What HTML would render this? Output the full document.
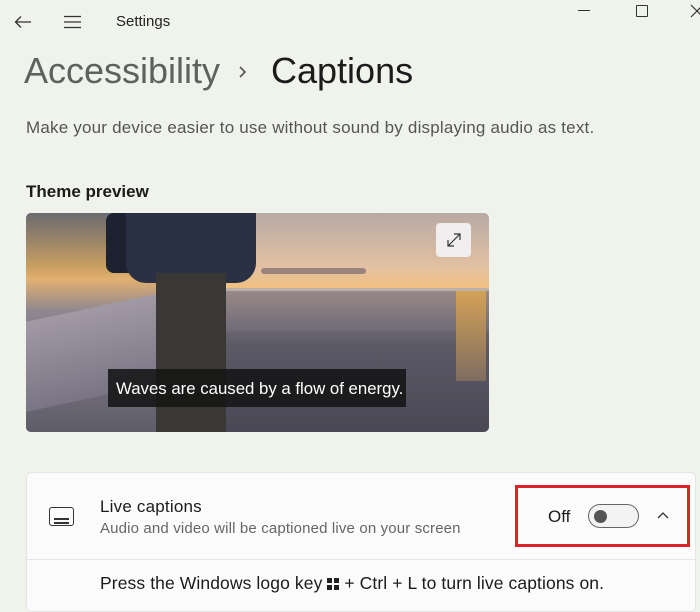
<!DOCTYPE html>
<html><head><style>
*{margin:0;padding:0;box-sizing:border-box}
body{width:700px;height:610px;background:#eff3ec;font-family:"Liberation Sans",sans-serif;position:relative;overflow:hidden;color:#1b1b1b}
.a{position:absolute;white-space:nowrap}
</style></head><body>
<svg class="a" style="left:13px;top:14px" width="20" height="16" viewBox="0 0 20 16"><path d="M18 8H3M8 2.5L2.5 8 8 13.5" stroke="#333" stroke-width="1.3" fill="none"/></svg>
<svg class="a" style="left:63px;top:15px" width="20" height="14"><path d="M1 1.5h17M1 7h17M1 12.5h17" stroke="#333" stroke-width="1.3"/></svg>
<div class="a" style="left:116px;top:13px;font-size:15px;color:#222">Settings</div>
<div class="a" style="left:578px;top:10px;width:12px;height:1px;background:#333"></div>
<div class="a" style="left:636px;top:5px;width:12px;height:12px;border:1.3px solid #333;border-radius:1px"></div>
<svg class="a" style="left:690px;top:4px" width="12" height="14"><path d="M1 1l12 12M13 1L1 13" stroke="#333" stroke-width="1.2"/></svg>
<div class="a" style="left:24px;top:50px;font-size:36px;color:#5f615e">Accessibility</div>
<svg class="a" style="left:238px;top:65px" width="10" height="14"><path d="M2 2l5 5-5 5" stroke="#555" stroke-width="1.6" fill="none"/></svg>
<div class="a" style="left:271px;top:50px;font-size:36px;color:#1b1b1b">Captions</div>
<div class="a" style="left:26px;top:118px;font-size:17px;color:#555;letter-spacing:0.2px">Make your device easier to use without sound by displaying audio as text.</div>
<div class="a" style="left:26px;top:182px;font-size:17px;font-weight:bold;color:#1b1b1b">Theme preview</div>
<div class="a" style="left:26px;top:213px;width:463px;height:219px;border-radius:5px;overflow:hidden;background:linear-gradient(180deg,#b8a9a4 0%,#e3c1a2 25%,#f0c080 34%,#8a7f88 40%,#5d5a68 60%,#4b4856 100%)">
<div class="a" style="left:0;top:0;width:130px;height:219px;background:linear-gradient(180deg,#6a6a70 0%,#caa060 25%,#e2b070 30%,#8e8790 45%,#5f5c6a 100%)"></div>
<div class="a" style="left:0;top:95px;width:130px;height:90px;background:linear-gradient(180deg,#a19aa5,#7a7585);transform:skewY(-12deg)"></div>
<div class="a" style="left:235px;top:55px;width:105px;height:6px;background:#7a6a70;border-radius:3px;opacity:.7"></div>
<div class="a" style="left:200px;top:75px;width:263px;height:3px;background:#bdb0a8"></div>
<div class="a" style="left:200px;top:78px;width:263px;height:40px;background:linear-gradient(180deg,#9a8a88,#6f6b78)"></div>
<div class="a" style="left:430px;top:78px;width:30px;height:90px;background:linear-gradient(180deg,#d4a257,#7f6c60)"></div>
<div class="a" style="left:80px;top:0;width:30px;height:60px;background:#1d2230;border-radius:8px"></div>
<div class="a" style="left:100px;top:0;width:130px;height:70px;background:#2a3145;border-radius:0 0 20px 20px"></div>
<div class="a" style="left:130px;top:60px;width:70px;height:159px;background:#3a3837"></div>
<div class="a" style="left:410px;top:10px;width:35px;height:34px;background:#f0eeef;border-radius:4px"></div>
<svg class="a" style="left:418px;top:17px" width="20" height="20"><path d="M4 16L16 4M10 4h6v6M4 10v6h6" stroke="#333" stroke-width="1.2" fill="none"/></svg>
<div class="a" style="left:82px;top:156px;width:298px;height:38px;background:rgba(20,20,20,.88)"></div>
<div class="a" style="left:90px;top:166px;font-size:16.8px;color:#fff">Waves are caused by a flow of energy.</div>
</div>
<div class="a" style="left:26px;top:472px;width:670px;height:140px;background:#fbfbfb;border:1px solid #e5e5e5;border-radius:5px"></div>
<div class="a" style="left:27px;top:559px;width:668px;height:1px;background:#e5e5e5"></div>
<div class="a" style="left:49px;top:507px;width:25px;height:19px;border:1.6px solid #333;border-radius:3px"></div>
<div class="a" style="left:54px;top:518px;width:15px;height:2px;background:#333"></div>
<div class="a" style="left:54px;top:522px;width:15px;height:2px;background:#333"></div>
<div class="a" style="left:100px;top:497px;font-size:17px;color:#1b1b1b;letter-spacing:0.2px">Live captions</div>
<div class="a" style="left:100px;top:520px;font-size:15px;color:#666;letter-spacing:0.15px">Audio and video will be captioned live on your screen</div>
<div class="a" style="left:515px;top:485px;width:175px;height:62px;border:3px solid #e02128"></div>
<div class="a" style="left:548px;top:507px;font-size:17px;color:#1b1b1b">Off</div>
<div class="a" style="left:588px;top:504px;width:51px;height:24px;border:1.3px solid #666;border-radius:12px;background:#f3f3f3"></div>
<div class="a" style="left:594px;top:510px;width:13px;height:13px;border-radius:50%;background:#555"></div>
<svg class="a" style="left:656px;top:510px" width="14" height="10"><path d="M2 8l5-5 5 5" stroke="#333" stroke-width="1.3" fill="none"/></svg>
<div class="a" style="left:100px;top:573px;font-size:17.5px;color:#1b1b1b;letter-spacing:0.1px">Press the Windows logo key <span style="display:inline-block;width:12px;height:12px;background:linear-gradient(#fbfbfb,#fbfbfb) 5px 0/2px 12px no-repeat,linear-gradient(#fbfbfb,#fbfbfb) 0 5px/12px 2px no-repeat,#222;vertical-align:-1px"></span> + Ctrl + L to turn live captions on.</div>
</body></html>
